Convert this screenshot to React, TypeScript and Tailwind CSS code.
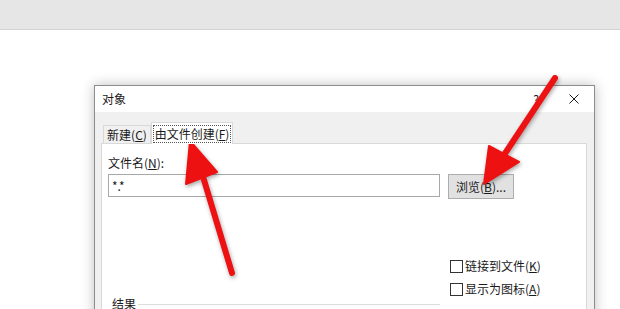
import React from 'react'

const font = { fontFamily: '"Noto Sans CJK SC", "Microsoft YaHei", sans-serif' }

function Checkbox({ label, keyChar }: { label: string; keyChar: string }) {
    return (
        <div className="flex items-center h-[16px] text-[12px] leading-[16px] text-[#1a1a1a]">
            <span className="w-[13px] h-[13px] border border-[#333] bg-white mr-[2px]" />
            <span>
                {label}(<u>{keyChar}</u>)
            </span>
        </div>
    )
}

function Arrows() {
    return (
        <svg
            className="absolute inset-0 pointer-events-none"
            width="620"
            height="309"
            viewBox="0 0 620 309"
            style={{ filter: 'drop-shadow(1px 2px 2px rgba(0,0,0,0.35))' }}
        >
            <g fill="#ee1111" stroke="#ee1111" strokeLinejoin="round">
                <line x1="232" y1="273" x2="201" y2="170" strokeWidth="6" strokeLinecap="round" />
                <polygon points="190,141 186,184 217,172" strokeWidth="2" />
                <line x1="555" y1="78" x2="502" y2="158" strokeWidth="6" strokeLinecap="round" />
                <polygon points="484,184 489,146 519,162" strokeWidth="2" />
            </g>
        </svg>
    )
}

export default function App() {
    return (
        <div className="relative w-[620px] h-[309px] overflow-hidden bg-white" style={font}>
            <div className="h-[30px] bg-[#e6e6e6] border-b border-[#d2d2d2]" />

            <div className="pl-[94px] pt-[55px]">
                <div className="w-[501px] h-[280px] border border-[#8c8c8c] bg-[#f0f0f0] shadow-[0_0_12px_rgba(0,0,0,0.25)] flex flex-col">
                    {/* title bar */}
                    <div className="h-[26px] bg-white flex items-center pl-[7px] pr-[15px] text-[12px] text-[#1a1a1a]">
                        <span className="flex-1">对象</span>
                        <span className="w-[10px] text-center mr-[28px]">?</span>
                        <svg width="10" height="10" viewBox="0 0 10 10">
                            <path d="M0.5 0.5 L9.5 9.5 M9.5 0.5 L0.5 9.5" stroke="#1a1a1a" strokeWidth="1" />
                        </svg>
                    </div>

                    {/* body */}
                    <div className="flex-1 px-[6px] pt-[9px]">
                        <div className="flex items-end h-[22px] text-[12px] text-[#1a1a1a]">
                            <div className="ml-[2px] h-[18px] w-[48px] flex items-center justify-center border border-b-0 border-[#d9d9d9] bg-[#f0f0f0]">
                                新建(<u>C</u>)
                            </div>
                            <div className="relative h-[22px] -mb-px w-[82px] border border-b-0 border-[#d9d9d9] bg-white flex items-center justify-center z-10">
                                <span className="border border-dotted border-[#555] px-[1px] leading-[16px]">
                                    由文件创建(<u>F</u>)
                                </span>
                            </div>
                        </div>

                        <div className="w-[486px] h-[200px] border border-[#d9d9d9] bg-white pl-[6px] pt-[11px] text-[12px] text-[#1a1a1a]">
                            <div className="leading-[16px]">
                                文件名(<u>N</u>):
                            </div>
                            <div className="flex items-start gap-[8px] mt-[3px]">
                                <div className="w-[332px] h-[23px] border border-[#a8a8a8] flex items-center pl-[3px] text-[12px]">
                                    *.*
                                </div>
                                <div className="w-[66px] h-[25px] border border-[#adadad] bg-[#e1e1e1] flex items-center justify-center">
                                    浏览(<u>B</u>)...
                                </div>
                            </div>
                            <div className="flex flex-col gap-[7px] ml-[342px] mt-[59px]">
                                <Checkbox label="链接到文件" keyChar="K" />
                                <Checkbox label="显示为图标" keyChar="A" />
                            </div>
                            <div className="flex items-center w-[332px] -mt-px pl-[4px] leading-[16px]">
                                <span>结果</span>
                                <span className="flex-1 h-px bg-[#dcdcdc] ml-[2px]" />
                            </div>
                        </div>
                    </div>
                </div>
            </div>

            <Arrows />
        </div>
    )
}
